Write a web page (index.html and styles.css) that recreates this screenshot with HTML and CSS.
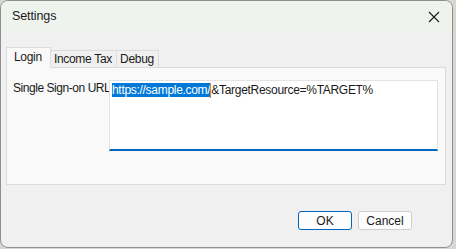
FILE: index.html
```html
<!DOCTYPE html>
<html lang="en">
<head>
  <meta charset="UTF-8" />
  <title>Settings</title>
  <link rel="stylesheet" href="styles.css">
</head>
<body>
  <div class="window">
    <div class="titlebar">
      <span class="title">Settings</span>
      <svg class="close" width="12" height="12" viewBox="0 0 12 12">
        <path d="M1 1 L11 11 M11 1 L1 11" stroke="#1a1a1a" stroke-width="1.1" fill="none"/>
      </svg>
    </div>
    <div class="body">
      <div class="tabs">
        <div class="tab active">Login</div>
        <div class="tab">Income Tax</div>
        <div class="tab">Debug</div>
      </div>
      <div class="panel">
        <div class="row">
          <label class="label">Single Sign-on URL</label>
          <div class="textbox"><span class="sel">https://sample.com/</span><span class="caret"></span>&amp;TargetResource=%TARGET%</div>
        </div>
      </div>
      <div class="buttons">
        <button class="btn default">OK</button>
        <button class="btn">Cancel</button>
      </div>
    </div>
  </div>
</body>
</html>
```

FILE: styles.css
```css
body {
  margin: 0;
  background: #d6d6d2;
  font-family: "Liberation Sans", Arial, sans-serif;
  font-size: 12px;
  letter-spacing: -0.3px;
  color: #1a1a1a;
}
.window {
  width: 451px;
  height: 246px;
  border: 1px solid #8f8f8f;
  border-radius: 8px;
  overflow: hidden;
  background: #f0f0f0;
  display: flex;
  flex-direction: column;
}
.titlebar {
  height: 31px;
  background: #eef3ee;
  display: flex;
  align-items: center;
  justify-content: space-between;
  padding: 0 8px 0 11px;
  flex-shrink: 0;
}
.title {
  font-size: 12.5px;
  letter-spacing: -0.1px;
  margin-top: -1px;
}
.close {
  margin-right: 4px;
}
.body {
  flex: 1;
  padding: 15px 6px 0 5px;
  display: flex;
  flex-direction: column;
}
.tabs {
  display: flex;
  align-items: flex-end;
  height: 20px;
  position: relative;
  z-index: 1;
}
.tab {
  height: 17px;
  line-height: 16px;
  padding: 0 4px 0 3px;
  border: 1px solid #dcdcdc;
  border-bottom: none;
  background: #f0f0f0;
  box-sizing: border-box;
  margin-left: -1px;
}
.tab:first-child {
  margin-left: 0;
}
.tab.active {
  height: 21px;
  line-height: 19px;
  padding: 0 8px 0 7px;
  background: #f9f9f9;
  margin-bottom: -1px;
}
.panel {
  height: 118px;
  background: #f9f9f9;
  border: 1px solid #dcdcdc;
  box-sizing: border-box;
  padding: 12px 8px 0 6px;
}
.row {
  display: flex;
  align-items: flex-start;
}
.label {
  flex: 0 0 96px;
  min-width: 0;
  padding-top: 1px;
  white-space: nowrap;
  letter-spacing: -0.45px;
}
.textbox {
  position: relative;
  flex: 0 0 329px;
  height: 71px;
  background: #fff;
  border: 1px solid #e3e3e3;
  border-bottom: 2px solid #0067c0;
  box-sizing: border-box;
  padding: 2px 2px;
  line-height: 15px;
  white-space: nowrap;
  overflow: hidden;
}
.sel {
  background: #0078d7;
  color: #fff;
}
.caret {
  display: inline-block;
  width: 1px;
  height: 15px;
  background: #f08020;
  vertical-align: top;
}
.buttons {
  display: flex;
  justify-content: flex-end;
  gap: 6px;
  margin-top: 26px;
  padding-right: 34px;
}
.btn {
  font: inherit;
  letter-spacing: 0;
  width: 54px;
  height: 19px;
  padding: 0;
  background: #fdfdfd;
  border: 1px solid #cfcfcf;
  border-radius: 3px;
  color: #1a1a1a;
}
.btn.default {
  border-color: #0067c0;
}
```
